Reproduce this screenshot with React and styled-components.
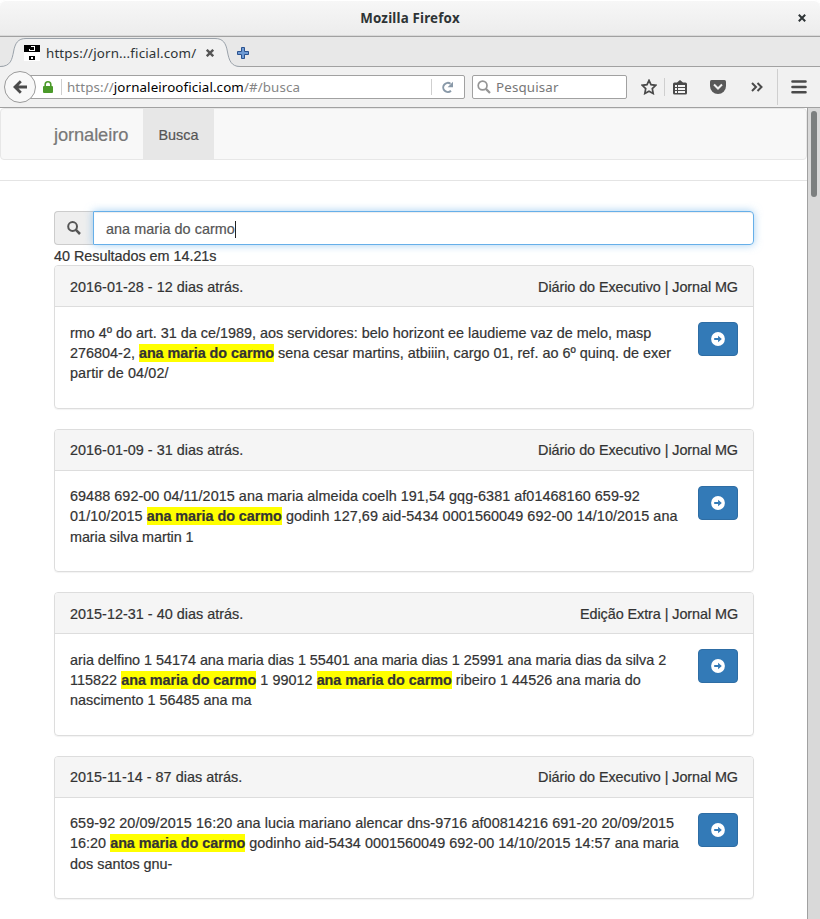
import React from "react";
import styled, { createGlobalStyle } from "styled-components";

const GlobalStyle = createGlobalStyle`
  * { box-sizing: border-box; }
  body { margin: 0; background: #fff; overflow: hidden; }
  svg { display: block; flex: none; }
`;

const Window = styled.div`
  width: 820px;
  height: 919px;
  overflow: hidden;
  display: flex;
  flex-direction: column;
  font-family: "Noto Sans", "Open Sans", sans-serif;
  background: #fff;
`;
const TitleBar = styled.header`
  height: 37px;
  flex: none;
  display: grid;
  grid-template-columns: 36px 1fr 36px;
  align-items: center;
  background: linear-gradient(#f7f7f7, #ececec);
  border-bottom: 1px solid #a1a1a1;
  box-shadow: inset 0 -1px #d9d9d9, inset 0 1px #fff;
  border-radius: 6px 6px 0 0;
`;
const WindowTitle = styled.h1`
  grid-column: 2;
  margin: 0;
  text-align: center;
  font-size: 13.33px;
  font-weight: 700;
  letter-spacing: ${(p) => p.$spacing}px;
  color: #2e3436;
`;
const TabStrip = styled.div`
  height: 30px;
  flex: none;
  display: flex;
  position: relative;
  align-items: center;
  background: #e8e8e8;
  border-bottom: 1px solid #a1a1a1;
`;
const TabShape = styled.svg`
  position: absolute;
  left: 0;
  top: 0;
`;
const Tab = styled.div`
  position: relative;
  display: flex;
  align-items: center;
  width: 237px;
  height: 30px;
  padding: 3px 0 0 24px;
`;
const TabLabel = styled.span`
  width: 150px;
  margin: 0 10px 0 6px;
  white-space: nowrap;
  font-size: 13.33px;
  letter-spacing: ${(p) => p.$spacing}px;
  color: #2e3436;
`;
const Toolbar = styled.nav`
  height: 41px;
  flex: none;
  display: flex;
  align-items: center;
  padding-left: 4px;
  background: #f1f1f1;
  border-bottom: 1px solid #a1a1a1;
`;
const BackButton = styled.button`
  width: 32px;
  height: 32px;
  flex: none;
  display: grid;
  place-items: center;
  padding: 0;
  border: 1px solid #9a9a9a;
  border-radius: 50%;
  background: #f8f8f8;
  z-index: 1;
`;
const AddressBar = styled.div`
  width: 439px;
  height: 24px;
  margin-left: -10px;
  flex: none;
  display: flex;
  align-items: center;
  padding-left: 16px;
  border: 1px solid #a1a1a1;
  border-radius: 2px;
  background: #fff;
`;
const Divider = styled.i`
  width: 1px;
  flex: none;
  height: ${(p) => p.$h}px;
  margin: ${(p) => p.$m || "0"};
  background: #cfcfcf;
`;
const Url = styled.span`
  flex: 1;
  white-space: nowrap;
  font-size: 13.33px;
  letter-spacing: ${(p) => p.$spacing}px;
  color: #858585;
  b { font-weight: 400; color: #000; }
`;
const SearchBox = styled.div`
  width: 155px;
  height: 24px;
  margin-left: 7px;
  flex: none;
  display: flex;
  align-items: center;
  gap: 5px;
  padding-left: 4px;
  border: 1px solid #a1a1a1;
  border-radius: 2px;
  background: #fff;
  font-size: 13.33px;
  letter-spacing: 0.15px;
  color: #777;
`;
const ToolIcons = styled.div`
  flex: 1;
  height: 40px;
  display: flex;
  align-items: center;
  padding-left: 14px;
`;
const Viewport = styled.div`
  flex: 1;
  min-height: 0;
  display: flex;
  font-family: "Liberation Sans", Arial, sans-serif;
  font-size: 14.4px;
  line-height: 20.2px;
  color: #333;
  -webkit-text-stroke-width: 0.2px;
`;
const Page = styled.main`
  width: 807px;
  overflow: hidden;
`;
const Scrollbar = styled.aside`
  width: 13px;
  padding: 3px 3px 0 3px;
  border-left: 1px solid #a1a1a1;
  background: #d9d9d9;
`;
const Thumb = styled.div`
  width: 6px;
  height: 86px;
  border-radius: 3px;
  background: #7c7f7f;
`;
const Navbar = styled.nav`
  height: 52px;
  display: flex;
  align-items: stretch;
  padding-left: 53px;
  border: 1px solid #e7e7e7;
  border-radius: 4px;
  background: #f8f8f8;
`;
const Brand = styled.a`
  width: 89px;
  line-height: 52px;
  font-size: 18.3px;
  letter-spacing: ${(p) => p.$spacing}px;
  color: #777;
`;
const NavItem = styled.a`
  width: 71px;
  text-align: center;
  line-height: 52px;
  background: #e7e7e7;
  color: #555;
`;
const Rule = styled.hr`
  height: 1px;
  margin: 20px 0 30px;
  border: 0;
  background: #e4e4e4;
`;
const Container = styled.section`
  width: 700px;
  margin-left: 54px;
`;
const InputGroup = styled.div`
  display: flex;
  height: 34px;
`;
const Addon = styled.span`
  width: 39px;
  display: grid;
  place-items: center;
  border: 1px solid #ccc;
  border-right: 0;
  border-radius: 4px 0 0 4px;
  background: #eee;
`;
const Query = styled.div`
  flex: 1;
  display: flex;
  align-items: center;
  padding: 2px 12px 0;
  border: 1px solid #66afe9;
  border-radius: 0 4px 4px 0;
  box-shadow: inset 0 1px 1px rgba(0, 0, 0, 0.075), 0 0 8px rgba(102, 175, 233, 0.6);
  color: #555;
  letter-spacing: ${(p) => p.$spacing}px;
`;
const Caret = styled.i`
  width: 1px;
  height: 17px;
  background: #222;
`;
const Summary = styled.div`
  height: 20.2px;
  padding-top: 1px;
  letter-spacing: ${(p) => p.$spacing}px;
`;
const Panel = styled.article`
  height: 143.5px;
  margin-bottom: 20px;
  border: 1px solid #ddd;
  border-radius: 4px;
  box-shadow: 0 1px 1px rgba(0, 0, 0, 0.05);
`;
const PanelHeading = styled.header`
  display: flex;
  justify-content: space-between;
  height: 41px;
  padding: 10.6px 15px 0;
  border-bottom: 1px solid #ddd;
  border-radius: 3px 3px 0 0;
  background: #f5f5f5;
`;
const HeadingText = styled.span`
  letter-spacing: ${(p) => p.$spacing}px;
`;
const PanelBody = styled.div`
  display: flex;
  justify-content: space-between;
  padding: 15px;
`;
const Excerpt = styled.p`
  margin: 0.47px 0 0;
`;
const Line = styled.span`
  display: block;
  white-space: nowrap;
  letter-spacing: ${(p) => p.$spacing}px;
`;
const Mark = styled.strong`
  background: #ff0;
  letter-spacing: -0.05px;
  padding: 1px 0;
`;
const OpenButton = styled.button`
  width: 40px;
  height: 34px;
  display: grid;
  place-items: center;
  padding: 0;
  border: 1px solid #2e6da4;
  border-radius: 4px;
  background: #337ab7;
`;

const TERM = "ana maria do carmo";

const RESULTS = [
  {
    date: "2016-01-28 - 12 dias atrás.",
    source: "Diário do Executivo | Jornal MG",
    lines: [
      ["rmo 4º do art. 31 da ce/1989, aos servidores: belo horizont ee laudieme vaz de melo, masp", 0],
      ["276804-2, * sena cesar martins, atbiiin, cargo 01, ref. ao 6º quinq. de exer", 0.01],
      ["partir de 04/02/", 0.12],
    ],
  },
  {
    date: "2016-01-09 - 31 dias atrás.",
    source: "Diário do Executivo | Jornal MG",
    lines: [
      ["69488 692-00 04/11/2015 ana maria almeida coelh 191,54 gqg-6381 af01468160 659-92", 0.045],
      ["01/10/2015 * godinh 127,69 aid-5434 0001560049 692-00 14/10/2015 ana", 0.065],
      ["maria silva martin 1", -0.06],
    ],
  },
  {
    date: "2015-12-31 - 40 dias atrás.",
    source: "Edição Extra | Jornal MG",
    lines: [
      ["aria delfino 1 54174 ana maria dias 1 55401 ana maria dias 1 25991 ana maria dias da silva 2", -0.025],
      ["115822 * 1 99012 * ribeiro 1 44526 ana maria do", 0.035],
      ["nascimento 1 56485 ana ma", 0],
    ],
  },
  {
    date: "2015-11-14 - 87 dias atrás.",
    source: "Diário do Executivo | Jornal MG",
    lines: [
      ["659-92 20/09/2015 16:20 ana lucia mariano alencar dns-9716 af00814216 691-20 20/09/2015", 0.065],
      ["16:20 * godinho aid-5434 0001560049 692-00 14/10/2015 14:57 ana maria", 0.025],
      ["dos santos gnu-", 0],
    ],
  },
];

const Highlighted = ({ text }) =>
  text.split("*").map((part, i) => (
    <React.Fragment key={i}>
      {i > 0 && <Mark>{TERM}</Mark>}
      {part}
    </React.Fragment>
  ));

const CloseIcon = ({ size, color, width }) => (
  <svg width={size} height={size} viewBox="0 0 8 8" stroke={color} strokeWidth={width}>
    <path d="M.8.8l6.4 6.4M7.2.8L.8 7.2" />
  </svg>
);

const Favicon = () => (
  <svg width="16" height="16" shapeRendering="crispEdges">
    <path fill="#fff" d="M0 0h16v16H0z" />
    <path fill="#000" d="M0 0h16v7H0z" />
    <path fill="#fff" d="M7 1h4v5H5V4h1v1h4V2H7z" />
    <path fill="#000" d="M5 11h6v4H5z" />
    <path fill="#fff" d="M7 12h2v2H7z" />
  </svg>
);

const SearchGlyph = ({ size, color, width }) => (
  <svg width={size} height={size} viewBox="0 0 14 14" fill="none" stroke={color}>
    <circle cx="5.6" cy="5.5" r="4.4" strokeWidth={width} />
    <path d="M8.9 8.9L13 13" strokeWidth={width + 0.5} />
  </svg>
);

const ArrowGlyph = () => (
  <svg width="14" height="14" viewBox="0 0 14 14">
    <circle cx="7" cy="7" r="6.9" fill="#fff" />
    <path fill="#337ab7" d="M3.2 5.9h3.9V3.8L10.8 7l-3.7 3.2V8.1H3.2z" />
  </svg>
);

const Gap = styled.i`
  width: ${(p) => p.$w}px;
  flex: none;
`;
const CloseSlot = styled.span`
  display: flex;
  justify-content: center;
`;

function Browser() {
  return (
    <>
      <TitleBar>
        <WindowTitle $spacing={0.2}>Mozilla Firefox</WindowTitle>
        <CloseSlot>
          <CloseIcon size={8} color="#2e3436" width={2} />
        </CloseSlot>
      </TitleBar>
      <TabStrip>
        <TabShape width="240" height="30">
          <path d="M0 30V29.5C11 29.5 12 22 13.5 15C15 6 18 1.5 26 1.5H215C223 1.5 226 6 227.5 15C229 23 231 29.5 240 29.5V30Z" fill="#f1f1f1" />
          <path d="M0 29.5C11 29.5 12 22 13.5 15C15 6 18 1.5 26 1.5H215C223 1.5 226 6 227.5 15C229 23 231 29.5 240 29.5" fill="none" stroke="#9aa2aa" />
        </TabShape>
        <Tab>
          <Favicon />
          <TabLabel $spacing={0.16}>https://jorn...ficial.com/</TabLabel>
          <CloseIcon size={8} color="#555" width={2.4} />
        </Tab>
        <svg width="12" height="14" viewBox="0 -2 12 14">
          <path d="M4.5.5h3v4h4v3h-4v4h-3v-4h-4v-3h4z" fill="#6f9bd4" stroke="#2b528f" />
        </svg>
      </TabStrip>
      <Toolbar>
        <BackButton>
          <svg width="14" height="14" viewBox="0 0 14 14" fill="none" stroke="#4a4a4a" strokeWidth="2.8">
            <path d="M7.8 1.2L2 7l5.8 5.8M2.2 7H14" />
          </svg>
        </BackButton>
        <AddressBar>
          <svg width="10" height="12" viewBox="0 0 10 12">
            <path d="M2.2 6V3.6a2.8 2.8 0 015.6 0V6" fill="none" stroke="#4b9a2a" strokeWidth="1.6" />
            <rect y="5" width="10" height="7" rx="1" fill="#4b9a2a" />
          </svg>
          <Divider $h={16} $m="0 5px 0 8px" />
          <Url $spacing={0.11}>
            https://<b>jornaleirooficial.com</b>/#/busca
          </Url>
          <Divider $h={16} $m="0 9px 0 0" />
          <svg width="13" height="13" viewBox="0 0 13 13">
            <path d="M10 9.8A4.6 4.6 0 119.5 2.7" fill="none" stroke="#8999a8" strokeWidth="2" />
            <path d="M12 .8v5.4H6.6z" fill="#8999a8" />
          </svg>
          <Gap $w={10} />
        </AddressBar>
        <SearchBox>
          <SearchGlyph size={14} color="#959595" width={1.7} />
          Pesquisar
        </SearchBox>
        <ToolIcons>
          <svg width="16" height="16" viewBox="0 0 16 16">
            <path d="M8 1.4l2 4.3 4.8.6-3.5 3.3.9 4.9L8 12.2l-4.2 2.3.9-4.9L1.2 6.3l4.8-.6z" fill="none" stroke="#4a4a4a" strokeWidth="1.7" />
          </svg>
          <Divider $h={18} $m="0 8px 0 7px" />
          <svg width="14" height="15" viewBox="0 0 14 15">
            <path d="M0 4q0-1.5 1.5-1.5H4L7 0l3 2.5h2.5Q14 2.5 14 4v9q0 1.5-1.5 1.5h-11Q0 14.5 0 13z" fill="#4a4a4a" />
            <path d="M2 5h2v2H2zM5 5h7v2H5zM2 8h2v2H2zM5 8h7v2H5zM2 11h2v2H2zM5 11h7v2H5z" fill="#f4f4f4" />
          </svg>
          <Gap $w={23} />
          <svg width="16" height="14" viewBox="0 0 16 14">
            <path d="M0 1.5Q0 0 1.5 0h13Q16 0 16 1.5V6A8 8 0 010 6z" fill="#595959" />
            <path d="M4 4.5l4 4 4-4" fill="none" stroke="#f1f1f1" strokeWidth="2" />
          </svg>
          <Gap $w={25} />
          <svg width="12" height="10" viewBox="0 0 12 10" fill="none" stroke="#4a4a4a" strokeWidth="2">
            <path d="M1 1l4 4-4 4M6.5 1l4 4-4 4" />
          </svg>
          <Divider $h={36} $m="0 13px 0 14px" />
          <svg width="16" height="14" viewBox="0 0 16 14">
            <path d="M1.5 1.5h13M1.5 7h13M1.5 12.3h13" stroke="#4a4a4a" strokeWidth="2.6" strokeLinecap="round" />
          </svg>
        </ToolIcons>
      </Toolbar>
    </>
  );
}

export default function App() {
  return (
    <Window>
      <GlobalStyle />
      <Browser />
      <Viewport>
        <Page>
          <Navbar>
            <Brand $spacing={-0.1}>jornaleiro</Brand>
            <NavItem>Busca</NavItem>
          </Navbar>
          <Rule />
          <Container>
            <InputGroup>
              <Addon>
                <SearchGlyph size={14} color="#555" width={2} />
              </Addon>
              <Query $spacing={0.05}>
                {TERM}
                <Caret />
              </Query>
            </InputGroup>
            <Summary $spacing={-0.03}>40 Resultados em 14.21s</Summary>
            {RESULTS.map((r) => (
              <Panel key={r.date}>
                <PanelHeading>
                  <HeadingText $spacing={0.02}>{r.date}</HeadingText>
                  <HeadingText $spacing={-0.07}>{r.source}</HeadingText>
                </PanelHeading>
                <PanelBody>
                  <Excerpt>
                    {r.lines.map(([text, spacing]) => (
                      <Line key={text} $spacing={spacing}>
                        <Highlighted text={text} />
                      </Line>
                    ))}
                  </Excerpt>
                  <OpenButton>
                    <ArrowGlyph />
                  </OpenButton>
                </PanelBody>
              </Panel>
            ))}
          </Container>
        </Page>
        <Scrollbar>
          <Thumb />
        </Scrollbar>
      </Viewport>
    </Window>
  );
}
